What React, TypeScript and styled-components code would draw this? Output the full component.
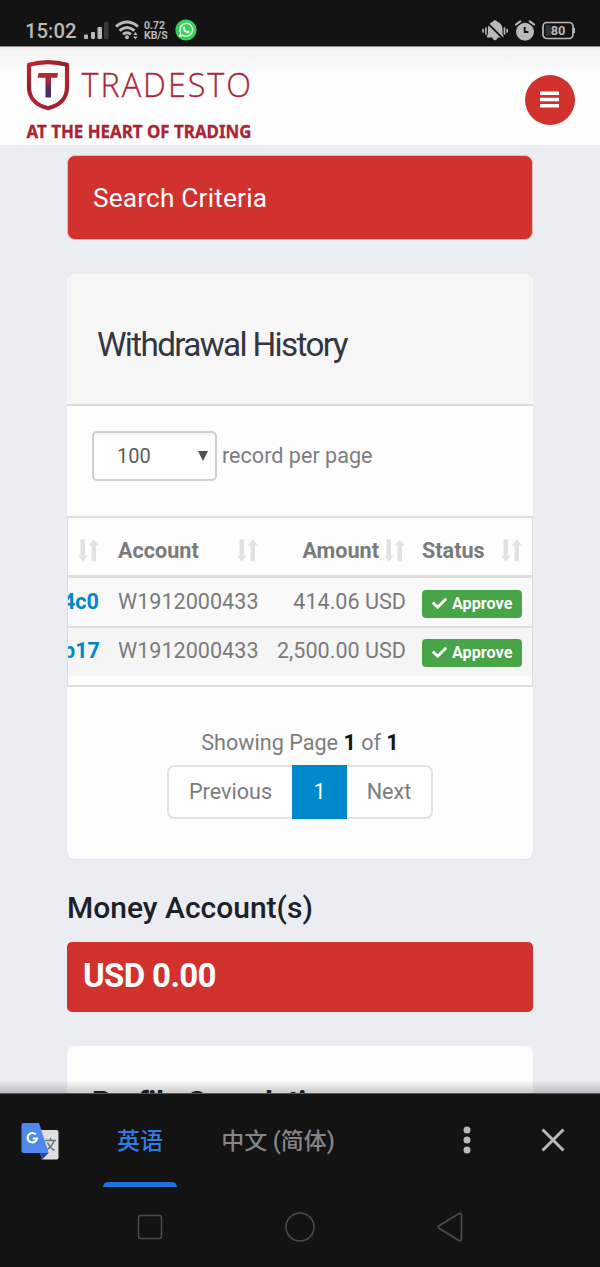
import React from "react";
import styled, { createGlobalStyle } from "styled-components";
import { FaCheck } from "react-icons/fa";

const GlobalStyle = createGlobalStyle`
  * { box-sizing: border-box; }
  body { margin: 0; background: #ebedf2; font-family: Roboto, "Noto Sans CJK SC", sans-serif; }
  svg { display: block; flex: none; }
`;

const Screen = styled.div`
  display: flex;
  flex-direction: column;
  width: 600px;
  height: 1267px;
  overflow: hidden;
  background: #ebedf2;
  white-space: nowrap;
`;

/* ---------- phone status bar ---------- */

const StatusBar = styled.header`
  flex: none;
  display: flex;
  justify-content: space-between;
  align-items: flex-start;
  height: 46px;
  padding: 18px 25px 0;
  background: #131313;
  color: #b9b9b9;
`;
const StatusGroup = styled.div<{ $gap: number }>`
  display: flex;
  align-items: center;
  height: 24px;
  gap: ${(p) => p.$gap}px;
`;
const Clock = styled.span`
  width: 53px;
  font-size: 20.3px;
  font-weight: 500;
  line-height: 24px;
  padding-top: 2px;
`;
const NetSpeed = styled.span`
  display: flex;
  flex-direction: column;
  width: 24px;
  margin: 1px 1px 0 -1px;
  font-size: 10.6px;
  letter-spacing: -0.1px;
  font-weight: 700;
  line-height: 10px;
`;

/* ---------- site header ---------- */

const SiteHeader = styled.div`
  flex: none;
  display: flex;
  justify-content: space-between;
  align-items: flex-start;
  height: 99px;
  padding: 0 25px 0 26px;
  border-top: 1px solid #8f8f8f;
  background: linear-gradient(#ececec 0, #f5f5f5 5px, #f8f8f8 18px, #fefefe 28px, #fefefe 100%);
`;
const MenuButton = styled.button`
  display: flex;
  align-items: center;
  justify-content: center;
  width: 50px;
  height: 50px;
  margin-top: 28px;
  padding: 0 1px 2px 0;
  border: 0;
  border-radius: 50%;
  background: #d2322d;
  color: #fff;
`;

/* ---------- page ---------- */

const Content = styled.main`
  flex: 1;
  min-height: 0;
  overflow: hidden;
  display: flex;
  flex-direction: column;
  padding: 10px 67px 0;
`;
const SearchPanel = styled.div`
  flex: none;
  display: flex;
  align-items: center;
  height: 85px;
  padding-left: 25px;
  border: 1px solid #e9b9b9;
  border-radius: 8px;
  background: #d2322d;
  color: #fff;
  font-size: 26.2px;
  letter-spacing: 0.2px;
`;
const Card = styled.section<{ $top: number; $height: number }>`
  flex: none;
  margin-top: ${(p) => p.$top}px;
  height: ${(p) => p.$height}px;
  border-radius: 8px;
  background: #fdfdfd;
  box-shadow: 0 1px 1px rgba(0, 0, 0, 0.05);
  overflow: hidden;
`;
const CardHeader = styled.div`
  display: flex;
  align-items: center;
  height: 132px;
  padding: 11px 0 0 30px;
  border-bottom: 2px solid #dcdcdc;
  background: #f6f6f6;
`;
const CardTitle = styled.h2`
  margin: 0;
  font-size: 33.3px;
  font-weight: 400;
  letter-spacing: -1.67px;
  color: #33353f;
`;
const PageSize = styled.div`
  display: flex;
  align-items: center;
  height: 110px;
  padding: 0 0 11px 25px;
  gap: 5px;
  font-size: 21.6px;
  color: #7d7d7d;
`;
const SelectBox = styled.div`
  display: flex;
  align-items: center;
  justify-content: space-between;
  width: 125px;
  height: 50px;
  padding: 0 7px 0 23px;
  border: 2px solid #cfcfcf;
  border-radius: 5px;
  background: #fff;
  box-shadow: inset 0 2px 2px rgba(0, 0, 0, 0.05);
  font-size: 20px;
  color: #5c5c5c;
`;

/* ---------- table ---------- */

const Table = styled.div`
  height: 171px;
  border: 2px solid #dddddd;
  border-width: 2px 1.5px 2px 1px;
  overflow: hidden;
  font-size: 21.6px;
  color: #7b7b7b;
`;
const Row = styled.div<{ $height: number; $pad: string; $shade?: string; $line?: number; $bold?: boolean }>`
  display: grid;
  grid-template-columns: 42px 158px 146px 1fr;
  align-items: center;
  height: ${(p) => p.$height}px;
  padding: ${(p) => p.$pad};
  background: ${(p) => p.$shade ?? "transparent"};
  border-bottom: ${(p) => p.$line ?? 0}px solid #dddddd;
  font-weight: ${(p) => (p.$bold ? 700 : 400)};
`;
const Cell = styled.div<{ $end?: boolean; $left?: number; $right?: number; $spread?: boolean }>`
  display: flex;
  align-items: center;
  justify-content: ${(p) => (p.$end ? "flex-end" : p.$spread ? "space-between" : "flex-start")};
  min-width: 0;
  padding: 0 ${(p) => p.$right ?? 8}px 0 ${(p) => p.$left ?? 8}px;
`;
const HeadLabel = styled.span`
  font-size: 21.6px;
`;
const IdLink = styled.a`
  color: #0088cc;
  font-weight: 700;
`;
const Badge = styled.span`
  display: flex;
  align-items: center;
  gap: 5px;
  width: 100px;
  height: 28px;
  margin-top: 4px;
  padding: 0 0 1px 10px;
  border-radius: 4px;
  background: #47a447;
  color: #fff;
  font-size: 16.2px;
  font-weight: 700;
`;

/* ---------- pagination ---------- */

const Showing = styled.p`
  margin: 42px 0 0;
  text-align: center;
  font-size: 21.6px;
  line-height: 28px;
  color: #7d7d7d;
  b { color: #161616; }
`;
const Pager = styled.div`
  display: flex;
  width: 266px;
  height: 54px;
  margin: 8px auto 0;
  border: 2px solid #e2e2e2;
  border-radius: 7px;
  background: #fff;
`;
const PagerItem = styled.div<{ $width: number; $active?: boolean }>`
  display: flex;
  align-items: center;
  justify-content: center;
  width: ${(p) => p.$width}px;
  height: ${(p) => (p.$active ? 54 : 50)}px;
  margin-top: ${(p) => (p.$active ? -2 : 0)}px;
  padding: 0 0 1px;
  background: ${(p) => (p.$active ? "#0088cc" : "transparent")};
  color: ${(p) => (p.$active ? "#fff" : "#7d7d7d")};
  font-size: 21.6px;
`;

/* ---------- balances ---------- */

const SectionTitle = styled.h3`
  flex: none;
  margin: 31px 0 0;
  height: 52px;
  font-size: 30px;
  line-height: 36px;
  font-weight: 500;
  color: #1d2127;
`;
const Balance = styled.div`
  flex: none;
  display: flex;
  align-items: center;
  height: 70px;
  padding: 0 0 3px 16px;
  border-radius: 5px;
  background: #d2322d;
  color: #fff;
  font-size: 33px;
  letter-spacing: -0.65px;
  font-weight: 700;
`;
const ProfileTitle = styled.h3`
  margin: 38px 0 0 25px;
  font-size: 30px;
  line-height: 36px;
  font-weight: 700;
  letter-spacing: -0.3px;
  color: #1d2127;
`;

/* ---------- translate bar and system navigation ---------- */

const TranslateBar = styled.div`
  position: relative;
  flex: none;
  display: grid;
  grid-template-columns: 80px 120px 156px 1fr 1fr;
  height: 95px;
  border-top: 1px solid #6f6f6f;
  background: #131313;
  &::before {
    content: "";
    position: absolute;
    left: 0;
    right: 0;
    bottom: 100%;
    height: 14px;
    background: linear-gradient(rgba(0, 0, 0, 0), rgba(0, 0, 0, 0.22));
  }
`;
const BarSlot = styled.div<{ $left?: number; $top?: number }>`
  display: flex;
  padding: ${(p) => p.$top ?? 0}px 0 0 ${(p) => p.$left ?? 0}px;
`;
const Tab = styled.div<{ $active?: boolean }>`
  display: flex;
  flex-direction: column;
  align-items: center;
  justify-content: space-between;
  padding-top: 31px;
  font-size: 23px;
  font-weight: 500;
  line-height: 34px;
  color: ${(p) => (p.$active ? "#2f7be4" : "#858585")};
`;
const Underline = styled.span`
  width: 74px;
  height: 5px;
  margin-bottom: 1px;
  border-radius: 5px 5px 0 0;
  background: #1f72da;
`;
const SystemNav = styled.nav`
  flex: none;
  display: flex;
  justify-content: center;
  align-items: center;
  gap: 122px;
  height: 79px;
  padding-bottom: 2px;
  background: #131313;
`;

const Signal = () => (
  <svg width="25" height="17" viewBox="0 0 25 17" fill="#b9b9b9">
    <rect x="0" y="12.500" width="4" height="4.500" rx="1" />
    <rect x="7" y="10" width="4" height="7" rx="1" />
    <rect x="13.500" y="5" width="4.500" height="12" rx="1" />
    <rect x="20" y="0" width="4.500" height="17" rx="1" fill="#3a3a3a" />
  </svg>
);

const Wifi = () => (
  <svg width="24" height="20" viewBox="0 0 24 20" fill="none" stroke="#b9b9b9" strokeWidth="2.900">
    <path d="M1 6.700Q12 -2.500 23 6.700" />
    <path d="M4.500 10.700Q12 4.300 19.500 10.700" />
    <path d="M8 14.400Q12 11 16 14.400" />
    <circle cx="12" cy="17.300" r="2" fill="#b9b9b9" stroke="none" />
    <path d="M18.200 15l2.200-3 2.200 3zM18.200 16.500l2.200 3 2.200-3z" fill="#b9b9b9" stroke="none" />
  </svg>
);

const Chat = () => (
  <svg width="22" height="22" viewBox="0 0 22 22">
    <circle cx="11" cy="11" r="10.600" fill="#32d158" />
    <path
      d="M4.700 17.300l1-3.500a6.400 6.400 0 1 1 2.500 2.500z"
      fill="none"
      stroke="#e6f9ea"
      strokeWidth="1.500"
      strokeLinejoin="round"
    />
    <path
      d="M8.400 7.500c.4-.4 1-.3 1.200.1l.6 1.300c0 .5-.6.8-.6 1.100.5 1.100 1.300 1.800 2.400 2.300.4 0 .7-.8 1.100-.7l1.400.7c.5.500-.1 1.600-.8 1.900-2.600.8-6.400-3-6.100-5.200.1-.6.400-1.100.8-1.500z"
      fill="#e6f9ea"
    />
  </svg>
);

const BellOff = () => (
  <svg width="26" height="21" viewBox="0 0 26 21">
    <path
      d="M11 1.500Q11.500 .3 13 .3T15 1.500Q20.500 3.500 20.500 9.500V14L21.500 16V17.500H5V16L6 14V9.500Q5.500 3.500 11 1.500zM10 17.500h6q-3 5.500-6 0z"
      fill="#b9b9b9"
    />
    <path d="M5 2.600L21.700 19.200" stroke="#131313" strokeWidth="1.900" />
    <path
      d="M1 9.500v2.500M4 8v6M22.500 8v6M25.200 9.500v2.500"
      stroke="#b9b9b9"
      strokeWidth="1.700"
      strokeLinecap="round"
    />
  </svg>
);

const Alarm = () => (
  <svg width="20" height="21" viewBox="0 0 20 21">
    <circle cx="10" cy="11.700" r="9" fill="#b9b9b9" />
    <path d="M1.500 6L7 1.800M18.500 6L13 1.800" stroke="#131313" strokeWidth="2" />
    <path
      d="M1 4.500L5.200 1.300M19 4.500L14.800 1.300"
      stroke="#b9b9b9"
      strokeWidth="2.200"
      strokeLinecap="round"
    />
    <path d="M9.700 7v5h3.700" fill="none" stroke="#131313" strokeWidth="1.900" />
  </svg>
);

const Battery = () => (
  <svg width="33" height="19" viewBox="0 0 33 19">
    <rect x="1" y="1.500" width="30" height="16" rx="4" fill="none" stroke="#b9b9b9" strokeWidth="1.700" />
    <rect x="3.500" y="4" width="5.500" height="11" rx="1" fill="#333" />
    <path d="M32 7v5" stroke="#b9b9b9" strokeWidth="2" />
    <text x="16" y="14.200" textAnchor="middle" fontSize="12.800" fontWeight="700" fill="#b9b9b9">
      80
    </text>
  </svg>
);

const Logo = () => (
  <svg width="230" height="98" viewBox="26 47 230 98">
    <defs>
      <linearGradient id="shield" x1="0" y1="0" x2="0.6" y2="1">
        <stop offset="0" stopColor="#bf2734" />
        <stop offset="0.450" stopColor="#8f222c" />
        <stop offset="0.650" stopColor="#b92531" />
        <stop offset="1" stopColor="#9f222d" />
      </linearGradient>
      <linearGradient id="letter" x1="0" y1="0" x2="0" y2="1">
        <stop offset="0" stopColor="#bf2734" />
        <stop offset="0.350" stopColor="#a0283d" />
        <stop offset="0.650" stopColor="#4c3160" />
        <stop offset="1" stopColor="#3b3170" />
      </linearGradient>
    </defs>
    <path
      d="M29 64.800Q48 59.400 67 64.800V87C67 98 60 105.500 48 108.200C36 105.500 29 98 29 87Z"
      fill="#fff"
      stroke="url(#shield)"
      strokeWidth="4.200"
      strokeLinejoin="round"
    />
    <path d="M38.500 73H58L57.200 77.700H51V97.500H45.500V77.700H37.500Z" fill="url(#letter)" />
    <text
      x="81.500"
      y="97.300"
      fontFamily="'Open Sans', 'Noto Sans', sans-serif"
      fontWeight="300"
      fontSize="32.500"
      textLength="171.500"
      lengthAdjust="spacingAndGlyphs"
      letterSpacing="2"
      fill="#a8283a"
      stroke="#a8283a"
      strokeWidth="0.300"
    >
      TRADESTO
    </text>
    <text
      x="26.500"
      y="137.500"
      fontFamily="'Noto Sans', sans-serif"
      fontWeight="700"
      fontSize="17.400"
      textLength="225"
      lengthAdjust="spacingAndGlyphs"
      fill="#a92434"
      stroke="#a92434"
      strokeWidth="0.300"
    >
      AT THE HEART OF TRADING
    </text>
  </svg>
);

const SortIcon = () => (
  <svg width="21" height="23" viewBox="0 0 21 23" fill="#e2e2e2">
    <path d="M2.500 0.500h4.500v16h3L4.800 22.500 0 16.500h2.500z" />
    <path d="M13.500 22.500H18V6.500h3L15.700 0.500 10.800 6.500h2.700z" />
  </svg>
);

const TranslateLogo = () => (
  <svg width="38" height="38" viewBox="0 0 38 38">
    <path d="M13 7h22.500q2 0 2 2v25.500q0 2-2 2H21z" fill="#dedede" />
    <path
      d="M24 17.500h11M29.500 15v2.500M33 17.500q-2 6.500-8.500 10M26.500 19.500q2.500 5.500 7 8"
      fill="none"
      stroke="#657783"
      strokeWidth="1.500"
    />
    <path d="M19 30h8.500L21 36.700z" fill="#3444a8" />
    <path d="M2.500 0H18l9.700 30H2.500q-2 0-2-2V2q0-2 2-2z" fill="#5089ee" />
    <path
      d="M14.800 11.500a4.700 4.700 0 1 0 1.200 4h-4.300"
      fill="none"
      stroke="#fff"
      strokeWidth="2.200"
    />
  </svg>
);

const rows = [
  { id: "4c0", account: "W1912000433", amount: "414.06 USD" },
  { id: "b17", account: "W1912000433", amount: "2,500.00 USD" },
];

export default function App() {
  return (
    <Screen>
      <GlobalStyle />
      <StatusBar>
        <StatusGroup $gap={6}>
          <Clock>15:02</Clock>
          <Signal />
          <Wifi />
          <NetSpeed>
            <span>0.72</span>
            <span>KB/S</span>
          </NetSpeed>
          <Chat />
        </StatusGroup>
        <StatusGroup $gap={7}>
          <BellOff />
          <Alarm />
          <Battery />
        </StatusGroup>
      </StatusBar>

      <SiteHeader>
        <Logo />
        <MenuButton aria-label="Menu">
          <svg width="19" height="17" viewBox="0 0 19 17" fill="#fff">
            <rect y="0.500" width="19" height="3.600" rx="0.600" />
            <rect y="6.700" width="19" height="3.600" rx="0.600" />
            <rect y="12.900" width="19" height="3.600" rx="0.600" />
          </svg>
        </MenuButton>
      </SiteHeader>

      <Content>
        <SearchPanel>Search Criteria</SearchPanel>

        <Card $top={34} $height={585}>
          <CardHeader>
            <CardTitle>Withdrawal History</CardTitle>
          </CardHeader>
          <PageSize>
            <SelectBox>
              100
              <svg width="10" height="10" viewBox="0 0 10 10">
                <path d="M0 0h10L5 10z" fill="#505050" />
              </svg>
            </SelectBox>
            record per page
          </PageSize>
          <Table>
            <Row $height={60} $pad="8px 0 0" $line={3} $bold>
              <Cell $end $right={11} $left={0}>
                <SortIcon />
              </Cell>
              <Cell $spread $right={10}>
                <HeadLabel>Account</HeadLabel>
                <SortIcon />
              </Cell>
              <Cell $end>
                <HeadLabel>Amount</HeadLabel>
                <Cell $left={5} $right={1}>
                  <SortIcon />
                </Cell>
              </Cell>
              <Cell $spread $right={10}>
                <HeadLabel>Status</HeadLabel>
                <SortIcon />
              </Cell>
            </Row>
            {rows.map((row, i) => (
              <Row
                key={row.id}
                $height={i ? 48 : 50}
                $pad={i ? "0 0 3px" : "0 0 1px"}
                $shade={i ? "#f5f5f5" : "#f9f9f9"}
                $line={i ? 0 : 2}
              >
                <Cell $end $right={i ? 10 : 11} $left={0}>
                  <IdLink>{row.id}</IdLink>
                </Cell>
                <Cell>{row.account}</Cell>
                <Cell $end>{row.amount}</Cell>
                <Cell>
                  <Badge>
                    <FaCheck size={15} />
                    Approve
                  </Badge>
                </Cell>
              </Row>
            ))}
          </Table>
          <Showing>
            Showing Page <b>1</b> of <b>1</b>
          </Showing>
          <Pager>
            <PagerItem $width={123}>Previous</PagerItem>
            <PagerItem $width={55} $active>
              1
            </PagerItem>
            <PagerItem $width={84}>Next</PagerItem>
          </Pager>
        </Card>

        <SectionTitle>Money Account(s)</SectionTitle>
        <Balance>USD 0.00</Balance>

        <Card $top={34} $height={120}>
          <ProfileTitle>Profile Completion</ProfileTitle>
        </Card>
      </Content>

      <TranslateBar>
        <BarSlot $left={21} $top={29}>
          <TranslateLogo />
        </BarSlot>
        <Tab $active>
          英语
          <Underline />
        </Tab>
        <Tab>中文 (简体)</Tab>
        <BarSlot $left={107} $top={32}>
          <svg width="8" height="28" viewBox="0 0 8 28" fill="#b9b9b9">
            <circle cx="4" cy="4" r="3.500" />
            <circle cx="4" cy="14" r="3.500" />
            <circle cx="4" cy="24" r="3.500" />
          </svg>
        </BarSlot>
        <BarSlot $left={63} $top={34}>
          <svg width="24" height="24" viewBox="0 0 24 24" stroke="#b9b9b9" strokeWidth="3">
            <path d="M1.500 1.500l21 21M22.500 1.500l-21 21" />
          </svg>
        </BarSlot>
      </TranslateBar>
      <SystemNav>
        <svg width="26" height="26" viewBox="0 0 26 26" fill="none" stroke="#4c4c4c" strokeWidth="1.500">
          <rect x="1.500" y="1.500" width="23" height="23" rx="2" />
        </svg>
        <svg width="30" height="30" viewBox="0 0 30 30" fill="none" stroke="#4c4c4c" strokeWidth="1.500">
          <circle cx="15" cy="15" r="14" />
        </svg>
        <svg width="26" height="30" viewBox="0 0 26 30" fill="none" stroke="#4c4c4c" strokeWidth="1.700" strokeLinejoin="round">
          <path d="M2 13.700Q0.500 15 2 16.300L22 28.500Q24.500 29 24.500 26.500V3.500Q24.500 1 22 1.500Z" />
        </svg>
      </SystemNav>
    </Screen>
  );
}
